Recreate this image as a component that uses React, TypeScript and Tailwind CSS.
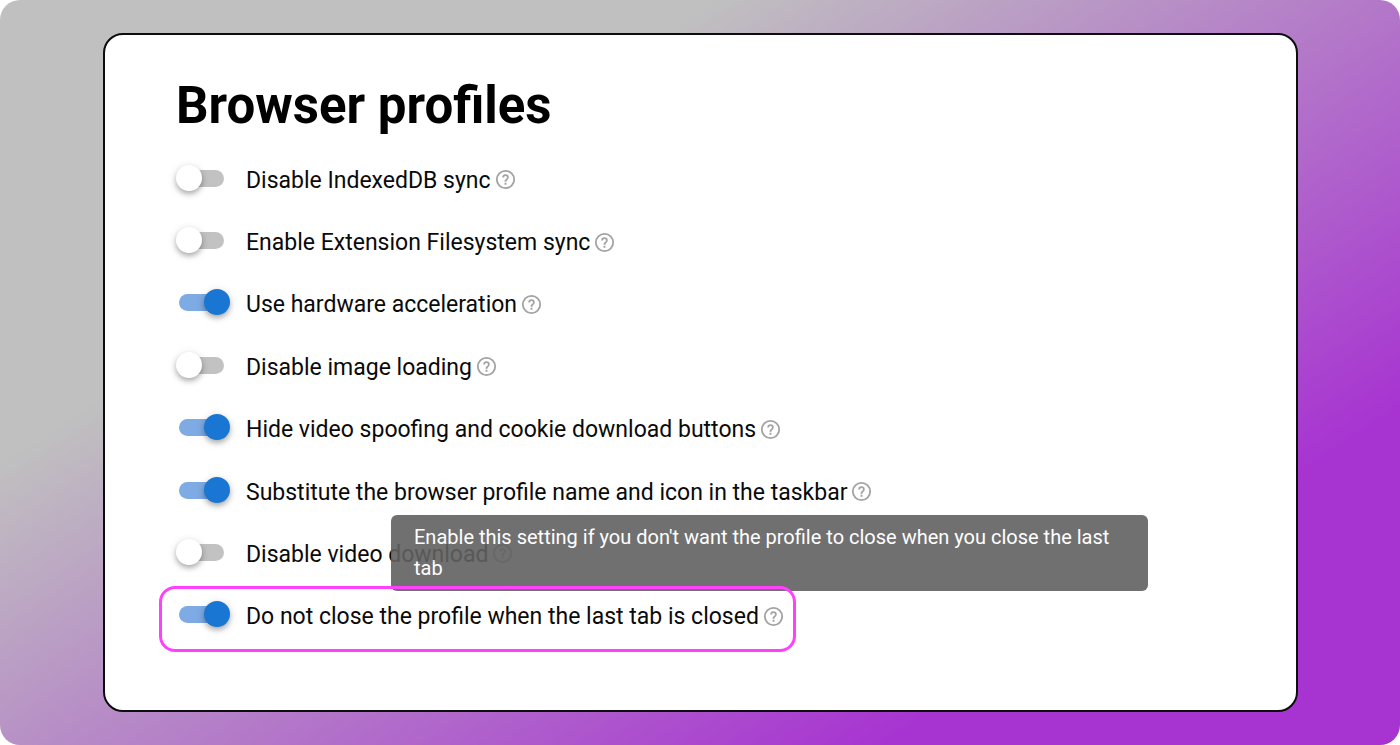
import React, { useState } from 'react';

type Setting = {
  id: string;
  label: string;
  enabled: boolean;
  hint?: string;
};

const SETTINGS: Setting[] = [
  { id: 'indexeddb-sync', label: 'Disable IndexedDB sync', enabled: false },
  { id: 'extension-sync', label: 'Enable Extension Filesystem sync', enabled: false },
  { id: 'hardware-acceleration', label: 'Use hardware acceleration', enabled: true },
  { id: 'image-loading', label: 'Disable image loading', enabled: false },
  { id: 'hide-buttons', label: 'Hide video spoofing and cookie download buttons', enabled: true },
  { id: 'taskbar-name', label: 'Substitute the browser profile name and icon in the taskbar', enabled: true },
  { id: 'video-download', label: 'Disable video download', enabled: false },
  {
    id: 'keep-profile-open',
    label: 'Do not close the profile when the last tab is closed',
    enabled: true,
    hint: "Enable this setting if you don't want the profile to close when you close the last tab",
  },
];

// Outlined question mark shown after every label
const HelpIcon: React.FC = () => (
  <svg className="w-[23px] h-[23px]" viewBox="0 0 24 24" fill="currentColor" aria-hidden="true">
    <path d="M12 2a10 10 0 1 0 0 20 10 10 0 0 0 0-20zm0 18.1a8.1 8.1 0 1 1 0-16.2 8.1 8.1 0 0 1 0 16.2z" />
    <path d="M11 15.5h2v2h-2zM12 6.5a3.4 3.4 0 0 0-3.4 3.4h1.9a1.5 1.5 0 1 1 3 0c0 1.5-2.5 1.7-2.5 4.4h2c0-1.8 2.4-2.3 2.4-4.4A3.4 3.4 0 0 0 12 6.5z" />
  </svg>
);

// Toggle: a checkbox drawn as a track with a round thumb on top of it
const Toggle: React.FC<{ id: string; checked: boolean; onChange: () => void }> = ({ id, checked, onChange }) => (
  <input
    id={id}
    type="checkbox"
    role="switch"
    checked={checked}
    onChange={onChange}
    className="relative shrink-0 appearance-none w-[45px] h-[17px] rounded-full bg-[#c2c2c2] checked:bg-[#7eabe4] cursor-pointer before:content-[''] before:absolute before:-top-[5px] before:-left-[3px] before:w-[26px] before:h-[26px] before:rounded-full before:bg-white before:shadow-[0_3px_5px_rgba(0,0,0,0.24),0_2px_10px_rgba(0,0,0,0.14)] checked:before:left-[25px] checked:before:bg-[#1976d2]"
  />
);

const SettingRow: React.FC<{ setting: Setting; onToggle: () => void }> = ({ setting, onToggle }) => (
  <li className="relative flex items-center">
    <Toggle id={setting.id} checked={setting.enabled} onChange={onToggle} />
    <div className="flex items-center gap-[3px] pl-[22px] pt-[3px]">
      <label htmlFor={setting.id} className="pt-[2px] text-[23px] leading-[30px] text-[#0a0a0a] cursor-pointer">
        {setting.label}
      </label>
      <button type="button" className="text-[#a3a3a3]" aria-label={`About: ${setting.label}`}>
        <HelpIcon />
      </button>
    </div>
    {setting.hint && (
      <>
        <div
          role="tooltip"
          className="absolute bottom-[55px] left-[212px] w-[757px] rounded-md bg-[#616161] opacity-90 px-[23px] py-[7px] text-xl leading-[31px] text-white"
        >
          {setting.hint}
        </div>
        <div className="absolute top-[2px] left-[-20px] w-[637px] h-[66px] rounded-2xl border-3 border-[#ff40ff] pointer-events-none" />
      </>
    )}
  </li>
);

const App: React.FC = () => {
  const [settings, setSettings] = useState<Setting[]>(SETTINGS);

  const toggle = (id: string) => {
    setSettings(settings.map((s) => (s.id === id ? { ...s, enabled: !s.enabled } : s)));
  };

  return (
    <div className="min-h-screen bg-white">
      <div className="min-h-screen rounded-[20px] bg-[linear-gradient(147deg,#c0c0c0_28%,#a733d1_80%)] pl-[103px] pr-[102px] py-[33px] font-['Roboto',sans-serif]">
        <main className="rounded-[20px] border-2 border-[#0d0d0d] bg-white px-[71px] pt-[41px] pb-[64px]">
          <h1 className="text-[51px] leading-[60px] font-bold text-black mb-[11px]">Browser profiles</h1>
          <ul className="grid auto-rows-fr min-h-[499px] pl-[3px]">
            {settings.map((s) => (
              <SettingRow key={s.id} setting={s} onToggle={() => toggle(s.id)} />
            ))}
          </ul>
        </main>
      </div>
    </div>
  );
};

export default App;
